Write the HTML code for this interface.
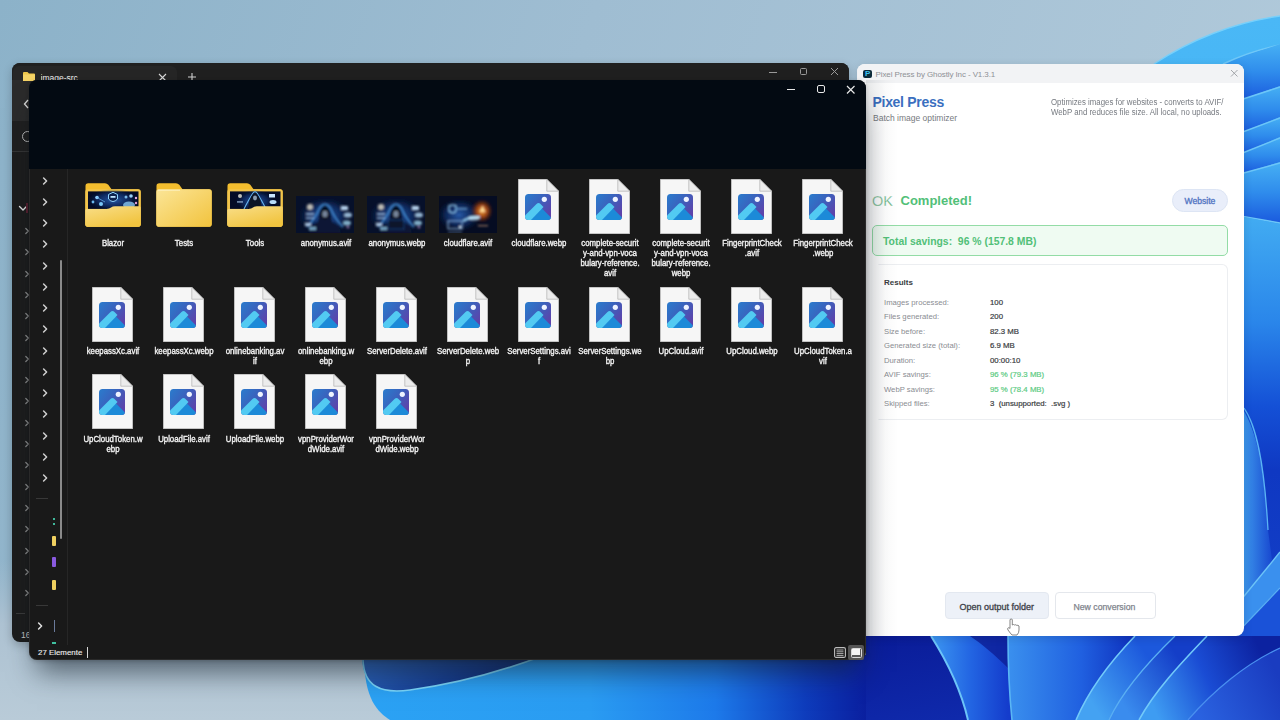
<!DOCTYPE html>
<html><head><meta charset="utf-8">
<style>
*{margin:0;padding:0;box-sizing:border-box}
html,body{width:1280px;height:720px;overflow:hidden;font-family:"Liberation Sans",sans-serif}
body{position:relative;background:#a9c4d8}
.abs{position:absolute}
.lbl{position:absolute;width:80px;text-align:center;color:#f4f4f4;font-size:8.6px;line-height:9.7px;white-space:nowrap;-webkit-text-stroke:0.35px #f4f4f4;transform:scaleX(0.91);transform-origin:50% 0}
</style></head>
<body>
<svg width="0" height="0" style="position:absolute">
<defs>
<linearGradient id="ig" x1="0" y1="0" x2="1" y2="0.7">
<stop offset="0" stop-color="#2a7ccd"/><stop offset="0.5" stop-color="#3a62bd"/><stop offset="1" stop-color="#5e42aa"/></linearGradient>
<clipPath id="icp"><rect x="7" y="15" width="26" height="26" rx="3.5"/></clipPath>
<linearGradient id="fb" x1="0" y1="0" x2="1" y2="1">
<stop offset="0" stop-color="#fbe597"/><stop offset="1" stop-color="#f2c33d"/></linearGradient>
<linearGradient id="ff" x1="0" y1="0" x2="0.6" y2="1">
<stop offset="0" stop-color="#f9de88"/><stop offset="1" stop-color="#f1c43f"/></linearGradient>
<radialGradient id="gB" cx="0.5" cy="0.5" r="0.5"><stop offset="0" stop-color="#2a64b8" stop-opacity="0.9"/><stop offset="0.6" stop-color="#153a80" stop-opacity="0.6"/><stop offset="1" stop-color="#0a1a40" stop-opacity="0"/></radialGradient>
<radialGradient id="glow1" cx="0.5" cy="0.5" r="0.5">
<stop offset="0" stop-color="#6fc4ff" stop-opacity="0.9"/><stop offset="1" stop-color="#6fc4ff" stop-opacity="0"/></radialGradient>
<radialGradient id="glowO" cx="0.5" cy="0.5" r="0.5">
<stop offset="0" stop-color="#ffb040" stop-opacity="1"/><stop offset="0.5" stop-color="#d85a10" stop-opacity="0.7"/><stop offset="1" stop-color="#802000" stop-opacity="0"/></radialGradient>
<filter id="bl5" x="-10%" y="-10%" width="120%" height="120%"><feGaussianBlur stdDeviation="0.9"/></filter><filter id="bl3" x="-10%" y="-10%" width="120%" height="120%"><feGaussianBlur stdDeviation="0.45"/></filter>
<symbol id="fi" viewBox="0 0 41 55">
<path d="M0.3 0.3 H28.8 L40.7 12.2 V54.7 H0.3 Z" fill="#f6f6f6" stroke="#cfcfcf" stroke-width="0.6"/>
<path d="M28.8 0.3 V12.2 H40.7 Z" fill="#ececec" stroke="#b0b0b0" stroke-width="0.7"/>
<g clip-path="url(#icp)">
<rect x="7" y="15" width="26" height="26" fill="url(#ig)"/>
<path d="M19.5 25 L33 38.5 V41 H12 Z" fill="#1c8ad8"/>
<path d="M7 36.5 L18.5 25 Q20.5 23.2 22.5 25 L25.5 28 L13 41 H7 Z" fill="#52caf2"/>
</g>
<circle cx="26.3" cy="20.3" r="2.6" fill="#eef3ff"/>
</symbol>
<symbol id="fold" viewBox="0 0 56 44">
<path d="M1 2.5 Q1 0 3.5 0 H20 Q22.5 0 24 2 L27 6 H53 Q56 6 56 9 V41 Q56 44 53 44 H3 Q0 44 0 41 V3 Z" fill="#f1be38"/>
<rect x="0" y="6" width="56" height="38" rx="3" fill="url(#fb)"/>
<path d="M0.6 8 Q0.6 6 2.6 6 H24 L26 8" fill="none" stroke="#fff6cc" stroke-width="0.8" opacity="0.7"/>
</symbol>
<symbol id="foldimg" viewBox="0 0 56 44">
<path d="M1 2.5 Q1 0 3.5 0 H20 Q22.5 0 24 2 L27 6 H53 Q56 6 56 9 V41 Q56 44 53 44 H3 Q0 44 0 41 V3 Z" fill="#f1be38"/>
<rect x="0" y="6" width="56" height="38" rx="3" fill="#f2c548"/>
<rect x="2.5" y="8.2" width="51" height="18" fill="#06112c"/>
<path d="M0 27 Q0 25.5 1.5 25.5 H22 Q24.5 25.5 26 24.5 Q27.5 23.5 30 23.5 H54.5 Q56 23.5 56 25 V41 Q56 44 53 44 H3 Q0 44 0 41 Z" fill="url(#ff)"/>
</symbol>
</defs></svg>
<svg class="abs" style="left:0;top:0" width="1280" height="720" viewBox="0 0 1280 720">
<defs>
<linearGradient id="sky" x1="0" y1="0" x2="1" y2="0.2">
<stop offset="0" stop-color="#8cb2c9"/><stop offset="0.45" stop-color="#9fbdd2"/><stop offset="1" stop-color="#b0c9da"/></linearGradient>
<linearGradient id="skyb" x1="0" y1="0" x2="0" y2="1">
<stop offset="0" stop-color="#a8bfd0" stop-opacity="0"/><stop offset="0.4" stop-color="#aec3d3"/><stop offset="1" stop-color="#b9cbd8"/></linearGradient>
<linearGradient id="blueB" x1="0" y1="0" x2="1" y2="0">
<stop offset="0" stop-color="#2ba2f4"/><stop offset="0.45" stop-color="#2a9cf2"/><stop offset="0.7" stop-color="#1d7aea"/><stop offset="0.88" stop-color="#0e3cbc"/><stop offset="1" stop-color="#0a1f9f"/></linearGradient>
<linearGradient id="navy" x1="0" y1="0" x2="1" y2="0.3">
<stop offset="0" stop-color="#2f6cc8"/><stop offset="0.6" stop-color="#163e92"/><stop offset="1" stop-color="#0c2466"/></linearGradient>
<linearGradient id="ribTop" x1="0" y1="0" x2="0" y2="1">
<stop offset="0" stop-color="#4ab8f6"/><stop offset="1" stop-color="#36a4f2"/></linearGradient>
<linearGradient id="rs" x1="0" y1="0" x2="0" y2="1">
<stop offset="0" stop-color="#3aa4f2"/><stop offset="0.08" stop-color="#2a88ec"/><stop offset="0.25" stop-color="#34a0f0"/><stop offset="0.42" stop-color="#2478e6"/><stop offset="0.55" stop-color="#1248d0"/><stop offset="1" stop-color="#0e36c0"/></linearGradient>
<linearGradient id="band" x1="0" y1="0" x2="0" y2="1"><stop offset="0" stop-color="#46b0f4"/><stop offset="0.5" stop-color="#2f8cec"/><stop offset="1" stop-color="#1a5ade"/></linearGradient>
<linearGradient id="lower" x1="0" y1="0" x2="0" y2="1"><stop offset="0" stop-color="#42acf2"/><stop offset="0.25" stop-color="#2a86ea"/><stop offset="0.45" stop-color="#1450d6"/><stop offset="0.6" stop-color="#0f38c2"/><stop offset="1" stop-color="#1440c8"/></linearGradient>
<linearGradient id="petA" x1="0" y1="0" x2="1" y2="0">
<stop offset="0" stop-color="#2c78ea"/><stop offset="1" stop-color="#1440cc"/></linearGradient>
<linearGradient id="petB" x1="0" y1="0" x2="1" y2="0">
<stop offset="0" stop-color="#3488ea"/><stop offset="1" stop-color="#1a58dc"/></linearGradient>
<linearGradient id="dk" x1="0" y1="0" x2="1" y2="1">
<stop offset="0" stop-color="#0a1c98"/><stop offset="1" stop-color="#1232b8"/></linearGradient>
</defs>
<rect width="1280" height="720" fill="url(#sky)"/>
<rect x="0" y="560" width="420" height="160" fill="url(#skyb)"/>
<path d="M364 655 C364 700 378 712 390 720 L866 720 L866 655 Z" fill="url(#blueB)"/>
<path d="M362 655 C362 684 378 694 410 690 C455 684 500 672 545 655 Z" fill="url(#navy)"/>
<path d="M363 660 C364 686 380 694 410 690 C455 684 500 672 545 655" fill="none" stroke="#7ad6fa" stroke-width="1.6"/>
<path d="M1154 64 C1190 40 1235 22 1280 16 L1280 720 L1150 720 L1150 66 Z" fill="url(#ribTop)"/>
<path d="M1154 64 C1190 40 1235 22 1280 16" fill="none" stroke="#78d0fa" stroke-width="1.4"/>
<path d="M1223 64 C1240 56 1260 49 1280 45 L1280 720 L1200 720 L1200 70 Z" fill="url(#rs)"/>
<path d="M1223 64 C1240 56 1260 49 1280 45" fill="none" stroke="#70c8f8" stroke-width="1.4"/>
<path d="M1240 58 L1280 44 L1280 87 L1240 100 Z" fill="url(#band)"/>
<path d="M1240 100 L1280 86 L1280 118 L1240 133 Z" fill="url(#band)"/>
<path d="M1240 133 L1280 117 L1280 138 L1240 154 Z" fill="url(#band)"/>
<path d="M1240 154 L1280 137 L1280 163 L1240 174 Z" fill="url(#band)"/>
<path d="M1240 174 L1280 162 L1280 223 L1240 216 Z" fill="url(#band)"/>
<path d="M1240 100 L1280 87" fill="none" stroke="#6cc6f8" stroke-width="1.5"/>
<path d="M1240 133 L1280 118" fill="none" stroke="#6cc6f8" stroke-width="1.5"/>
<path d="M1240 154 L1280 138" fill="none" stroke="#6cc6f8" stroke-width="1.5"/>
<path d="M1240 174 L1280 163" fill="none" stroke="#6cc6f8" stroke-width="1.5"/>
<path d="M1240 216 L1280 223" fill="none" stroke="#6cc6f8" stroke-width="1.5"/>
<path d="M1240 216 L1280 224 L1280 640 L1240 640 Z" fill="url(#lower)"/>
<linearGradient id="gP" gradientUnits="userSpaceOnUse" x1="1244" y1="0" x2="1272" y2="0"><stop offset="0" stop-color="#3c96ec"/><stop offset="1" stop-color="#1848d0"/></linearGradient>
<path d="M1236 400 C1254 420 1264 460 1268 530 L1272 560 L1236 610 Z" fill="url(#gP)"/>
<path d="M1244 408 C1256 425 1264 460 1268 530" fill="none" stroke="#5ab4f4" stroke-width="1.3"/>
<path d="M1236 606 L1280 552 L1280 588 L1236 634 Z" fill="#3a90ee"/>
<path d="M1236 606 L1280 552" fill="none" stroke="#6cc4f8" stroke-width="1.4"/>
<path d="M1236 634 L1280 588 L1280 640 L1236 640 Z" fill="#1a52d8"/>
<path d="M1236 634 L1280 588" fill="none" stroke="#5ab0f4" stroke-width="1.2"/>
<rect x="866" y="636" width="414" height="84" fill="url(#dk)"/>
<linearGradient id="gA" gradientUnits="userSpaceOnUse" x1="935" y1="0" x2="1008" y2="0"><stop offset="0" stop-color="#3a92f0"/><stop offset="0.5" stop-color="#2264e2"/><stop offset="1" stop-color="#143ccc"/></linearGradient>
<linearGradient id="gB2" gradientUnits="userSpaceOnUse" x1="1008" y1="0" x2="1130" y2="0"><stop offset="0" stop-color="#3a90ee"/><stop offset="0.6" stop-color="#2060e0"/><stop offset="1" stop-color="#0f34c0"/></linearGradient>
<linearGradient id="gC" gradientUnits="userSpaceOnUse" x1="1090" y1="700" x2="1150" y2="660"><stop offset="0" stop-color="#44a2f2"/><stop offset="1" stop-color="#1c58dc"/></linearGradient>
<linearGradient id="gD" gradientUnits="userSpaceOnUse" x1="1120" y1="700" x2="1180" y2="660"><stop offset="0" stop-color="#3a8cee"/><stop offset="1" stop-color="#143ec8"/></linearGradient>
<linearGradient id="gE" gradientUnits="userSpaceOnUse" x1="1150" y1="700" x2="1260" y2="650"><stop offset="0" stop-color="#3e9cf2"/><stop offset="0.5" stop-color="#1a4cd4"/><stop offset="1" stop-color="#0c22a0"/></linearGradient>
<linearGradient id="gF" gradientUnits="userSpaceOnUse" x1="1200" y1="720" x2="1280" y2="680"><stop offset="0" stop-color="#2a62e0"/><stop offset="1" stop-color="#1a3cc0"/></linearGradient>
<path d="M931 636 C950 666 962 694 968 720 L1012 720 C1009 690 1008 662 1008 636 Z" fill="url(#gA)"/>
<path d="M970 636 L1008 636 L1008 668 C995 655 982 644 970 636 Z" fill="#0c1e96" opacity="0.8"/>
<path d="M931 636 C950 666 962 694 968 720" fill="none" stroke="#6cc4f8" stroke-width="2"/>
<path d="M1008 636 L1135 636 C1108 664 1088 692 1076 720 L1012 720 C1009 690 1008 662 1008 636 Z" fill="url(#gB2)"/>
<path d="M1008 636 C1008 662 1009 690 1012 720" fill="none" stroke="#5ab6f4" stroke-width="1.6"/>
<path d="M1135 636 C1108 664 1088 692 1076 720 L1109 720 C1122 692 1146 664 1175 636 Z" fill="url(#gC)"/>
<path d="M1135 636 C1108 664 1088 692 1076 720" fill="none" stroke="#72cafa" stroke-width="1.6"/>
<path d="M1175 636 C1146 664 1122 692 1109 720 L1139 720 C1154 692 1180 664 1207 636 Z" fill="url(#gD)"/>
<path d="M1175 636 C1146 664 1122 692 1109 720" fill="none" stroke="#5ab0f4" stroke-width="1.3"/>
<path d="M1207 636 C1180 664 1154 692 1139 720 L1188 720 C1212 692 1245 664 1280 648 L1280 636 Z" fill="url(#gE)"/>
<path d="M1207 636 C1180 664 1154 692 1139 720" fill="none" stroke="#72cafa" stroke-width="1.6"/>
<path d="M1188 720 C1212 692 1245 664 1280 648 L1280 720 Z" fill="url(#gF)"/>
<path d="M1188 720 C1212 692 1245 664 1280 648" fill="none" stroke="#4a90f0" stroke-width="1.3"/>
</svg>
<div class="abs" style="left:857px;top:64px;width:387px;height:572px;background:#ffffff;border-radius:8px;overflow:hidden;box-shadow:0 2px 10px rgba(0,0,0,.12)">
<div class="abs" style="left:0;top:0;width:387px;height:19px;background:#f2f3f5"></div>
</div>
<div class="abs" style="left:863px;top:69.5px;width:9px;height:8.5px;background:#0b2a3a;border-radius:2px"></div>
<div class="abs" style="left:865px;top:69px;font-size:8px;font-weight:bold;color:#3cc0f0;line-height:10px">P</div>
<div class="abs" style="left:875.5px;top:70px;font-size:8px;color:#8e9196;white-space:nowrap;letter-spacing:-0.1px">Pixel Press by Ghostly Inc - V1.3.1</div>
<svg class="abs" style="left:1230.25px;top:69.25px" width="8.5" height="8.5" viewBox="-4.25 -4.25 8.5 8.5"><path d="M-3.25 -3.25 L3.25 3.25 M3.25 -3.25 L-3.25 3.25" stroke="#9a9da2" stroke-width="0.9" fill="none"/></svg>
<div class="abs" style="left:872.5px;top:94px;font-size:14px;font-weight:bold;color:#3b6fc0;white-space:nowrap;letter-spacing:-0.3px">Pixel Press</div>
<div class="abs" style="left:873px;top:112.5px;font-size:8.5px;color:#777a80;white-space:nowrap">Batch image optimizer</div>
<div class="abs" style="left:1050.5px;top:97.2px;font-size:8.3px;color:#767a80;white-space:nowrap;line-height:10.3px;transform:scaleX(0.945);transform-origin:0 0">Optimizes images for websites - converts to AVIF/<br>WebP and reduces file size. All local, no uploads.</div>
<div class="abs" style="left:872px;top:193px;font-size:14.5px;color:#5fae7c;white-space:nowrap;font-weight:normal;-webkit-text-stroke:0.3px #ffffff">OK</div>
<div class="abs" style="left:900.5px;top:193px;font-size:13px;font-weight:bold;color:#52c078;white-space:nowrap">Completed!</div>
<div class="abs" style="left:1172px;top:189px;width:56px;height:23px;background:#e9eefa;border:1px solid #dde5f4;border-radius:12px"></div>
<div class="abs" style="left:1184.5px;top:196px;font-size:8.6px;color:#5577c4;white-space:nowrap;-webkit-text-stroke:0.35px #5577c4">Website</div>
<div class="abs" style="left:872px;top:225px;width:356px;height:31px;background:#effbf2;border:1px solid #93dca6;border-radius:5px"></div>
<div class="abs" style="left:883px;top:236px;font-size:10.4px;font-weight:bold;color:#52c078;white-space:pre">Total savings:  96 % (157.8 MB)</div>
<div class="abs" style="left:878px;top:264px;width:350px;height:156px;background:#fff;border:1px solid #eceef1;border-left-color:transparent;border-radius:0 6px 6px 0"></div>
<div class="abs" style="left:884px;top:278.3px;font-size:8px;font-weight:bold;color:#3a3d42;white-space:nowrap">Results</div>
<div class="abs" style="left:884px;top:297.5px;font-size:7.7px;color:#8a8d92;white-space:nowrap">Images processed:</div>
<div class="abs" style="left:990px;top:297.5px;font-size:7.8px;color:#3a3d42;white-space:pre;-webkit-text-stroke:0.2px #3a3d42">100</div>
<div class="abs" style="left:884px;top:312.0px;font-size:7.7px;color:#8a8d92;white-space:nowrap">Files generated:</div>
<div class="abs" style="left:990px;top:312.0px;font-size:7.8px;color:#3a3d42;white-space:pre;-webkit-text-stroke:0.2px #3a3d42">200</div>
<div class="abs" style="left:884px;top:326.5px;font-size:7.7px;color:#8a8d92;white-space:nowrap">Size before:</div>
<div class="abs" style="left:990px;top:326.5px;font-size:7.8px;color:#3a3d42;white-space:pre;-webkit-text-stroke:0.2px #3a3d42">82.3 MB</div>
<div class="abs" style="left:884px;top:341.0px;font-size:7.7px;color:#8a8d92;white-space:nowrap">Generated size (total):</div>
<div class="abs" style="left:990px;top:341.0px;font-size:7.8px;color:#3a3d42;white-space:pre;-webkit-text-stroke:0.2px #3a3d42">6.9 MB</div>
<div class="abs" style="left:884px;top:355.5px;font-size:7.7px;color:#8a8d92;white-space:nowrap">Duration:</div>
<div class="abs" style="left:990px;top:355.5px;font-size:7.8px;color:#3a3d42;white-space:pre;-webkit-text-stroke:0.2px #3a3d42">00:00:10</div>
<div class="abs" style="left:884px;top:370.0px;font-size:7.7px;color:#8a8d92;white-space:nowrap">AVIF savings:</div>
<div class="abs" style="left:990px;top:370.0px;font-size:7.8px;color:#5dcc84;white-space:pre;-webkit-text-stroke:0.2px #5dcc84">96 % (79.3 MB)</div>
<div class="abs" style="left:884px;top:384.5px;font-size:7.7px;color:#8a8d92;white-space:nowrap">WebP savings:</div>
<div class="abs" style="left:990px;top:384.5px;font-size:7.8px;color:#5dcc84;white-space:pre;-webkit-text-stroke:0.2px #5dcc84">95 % (78.4 MB)</div>
<div class="abs" style="left:884px;top:399.0px;font-size:7.7px;color:#8a8d92;white-space:nowrap">Skipped files:</div>
<div class="abs" style="left:990px;top:399.0px;font-size:7.8px;color:#3a3d42;white-space:pre;-webkit-text-stroke:0.2px #3a3d42">3  (unsupported:  .svg )</div>
<div class="abs" style="left:945px;top:592px;width:104px;height:27px;background:#edf1f8;border:1px solid #e3e8f0;border-radius:4px"></div>
<div class="abs" style="left:959.5px;top:601.6px;font-size:9px;color:#3d4149;white-space:nowrap;-webkit-text-stroke:0.3px #3d4149">Open output folder</div>
<div class="abs" style="left:1054.5px;top:592px;width:101px;height:27px;background:#fff;border:1px solid #e4e7ec;border-radius:4px"></div>
<div class="abs" style="left:1073.5px;top:601.8px;font-size:8.7px;color:#80848c;white-space:nowrap;-webkit-text-stroke:0.25px #80848c">New conversion</div>
<div class="abs" style="left:866px;top:80px;width:30px;height:556px;background:linear-gradient(90deg,rgba(10,20,30,.1),rgba(10,20,30,.06) 30%,rgba(10,20,30,.02) 65%,rgba(0,0,0,0))"></div>
<div class="abs" style="left:12px;top:63px;width:837px;height:579px;background:#1c1c1c;border-radius:8px;overflow:hidden;box-shadow:0 3px 10px rgba(0,0,0,.22)">
<div class="abs" style="left:0;top:0;width:837px;height:17px;background:#202020"></div>
<div class="abs" style="left:1px;top:3px;width:164px;height:14px;background:#262626;border-radius:6px 6px 0 0"></div>
<div class="abs" style="left:0;top:17px;width:837px;height:41px;background:#2b2b2b"></div>
<div class="abs" style="left:0;top:58px;width:837px;height:30px;background:#1f1f1f"></div>
<div class="abs" style="left:0;top:88px;width:837px;height:1px;background:#2e2e2e"></div>
</div>
<svg class="abs" style="left:23px;top:72px" width="12" height="9" viewBox="0 0 12 9"><path d="M0 1 Q0 0 1 0 H4.5 L6 1.5 H11 Q12 1.5 12 2.5 V9 H0 Z" fill="#eec64a"/><rect x="0" y="2.5" width="12" height="6.5" fill="#f6d466"/></svg>
<div class="abs" style="left:40.5px;top:73px;font-size:8.5px;color:#eeeeee;white-space:nowrap;height:7px;overflow:hidden">image-src</div>
<svg class="abs" style="left:158.0px;top:72.5px" width="9" height="9" viewBox="-4.5 -4.5 9 9"><path d="M-3.5 -3.5 L3.5 3.5 M3.5 -3.5 L-3.5 3.5" stroke="#d8d8d8" stroke-width="1.1" fill="none"/></svg>
<svg class="abs" style="left:187px;top:72px" width="10" height="10" viewBox="0 0 10 10"><path d="M5 1 V9 M1 5 H9" stroke="#d0d0d0" stroke-width="1.1"/></svg>
<div class="abs" style="left:769px;top:72px;width:8px;height:1px;background:#9a9a9a"></div>
<div class="abs" style="left:800px;top:68px;width:7px;height:7px;border:1px solid #9a9a9a;border-radius:1.5px"></div>
<svg class="abs" style="left:829.5px;top:67.0px" width="9" height="9" viewBox="-4.5 -4.5 9 9"><path d="M-3.5 -3.5 L3.5 3.5 M3.5 -3.5 L-3.5 3.5" stroke="#9a9a9a" stroke-width="1" fill="none"/></svg>
<svg class="abs" style="left:23px;top:99px" width="6" height="10" viewBox="0 0 6 10"><path d="M5 1 L1.5 5 L5 9" fill="none" stroke="#d8d8d8" stroke-width="1.3"/></svg>
<div class="abs" style="left:22px;top:131px;width:11px;height:11px;border:1px solid #b8b8b8;border-radius:50%"></div>
<div class="abs" style="left:12px;top:151px;width:17px;height:1px;background:#343434"></div>
<svg class="abs" style="left:17.5px;top:204px" width="10" height="8" viewBox="0 0 10 8"><path d="M1.5 2.5 L5 6 L8.5 2.5" fill="none" stroke="#e0e0e0" stroke-width="1.4" stroke-linecap="round" stroke-linejoin="round"/></svg>
<div class="abs" style="left:26px;top:203px;width:1.5px;height:10px;background:#5a2030"></div>
<svg class="abs" style="left:24px;top:227.0px" width="6" height="8" viewBox="0 0 6 8"><path d="M1.8 1.5 L4.3 4 L1.8 6.5" fill="none" stroke="#8c8c8c" stroke-width="1.2" stroke-linecap="round" stroke-linejoin="round"/></svg>
<svg class="abs" style="left:24px;top:248.3px" width="6" height="8" viewBox="0 0 6 8"><path d="M1.8 1.5 L4.3 4 L1.8 6.5" fill="none" stroke="#8c8c8c" stroke-width="1.2" stroke-linecap="round" stroke-linejoin="round"/></svg>
<svg class="abs" style="left:24px;top:269.6px" width="6" height="8" viewBox="0 0 6 8"><path d="M1.8 1.5 L4.3 4 L1.8 6.5" fill="none" stroke="#8c8c8c" stroke-width="1.2" stroke-linecap="round" stroke-linejoin="round"/></svg>
<svg class="abs" style="left:24px;top:290.9px" width="6" height="8" viewBox="0 0 6 8"><path d="M1.8 1.5 L4.3 4 L1.8 6.5" fill="none" stroke="#8c8c8c" stroke-width="1.2" stroke-linecap="round" stroke-linejoin="round"/></svg>
<svg class="abs" style="left:24px;top:312.2px" width="6" height="8" viewBox="0 0 6 8"><path d="M1.8 1.5 L4.3 4 L1.8 6.5" fill="none" stroke="#8c8c8c" stroke-width="1.2" stroke-linecap="round" stroke-linejoin="round"/></svg>
<svg class="abs" style="left:24px;top:333.5px" width="6" height="8" viewBox="0 0 6 8"><path d="M1.8 1.5 L4.3 4 L1.8 6.5" fill="none" stroke="#8c8c8c" stroke-width="1.2" stroke-linecap="round" stroke-linejoin="round"/></svg>
<svg class="abs" style="left:24px;top:354.8px" width="6" height="8" viewBox="0 0 6 8"><path d="M1.8 1.5 L4.3 4 L1.8 6.5" fill="none" stroke="#8c8c8c" stroke-width="1.2" stroke-linecap="round" stroke-linejoin="round"/></svg>
<svg class="abs" style="left:24px;top:376.1px" width="6" height="8" viewBox="0 0 6 8"><path d="M1.8 1.5 L4.3 4 L1.8 6.5" fill="none" stroke="#8c8c8c" stroke-width="1.2" stroke-linecap="round" stroke-linejoin="round"/></svg>
<svg class="abs" style="left:24px;top:397.4px" width="6" height="8" viewBox="0 0 6 8"><path d="M1.8 1.5 L4.3 4 L1.8 6.5" fill="none" stroke="#8c8c8c" stroke-width="1.2" stroke-linecap="round" stroke-linejoin="round"/></svg>
<svg class="abs" style="left:24px;top:418.7px" width="6" height="8" viewBox="0 0 6 8"><path d="M1.8 1.5 L4.3 4 L1.8 6.5" fill="none" stroke="#8c8c8c" stroke-width="1.2" stroke-linecap="round" stroke-linejoin="round"/></svg>
<svg class="abs" style="left:24px;top:440.0px" width="6" height="8" viewBox="0 0 6 8"><path d="M1.8 1.5 L4.3 4 L1.8 6.5" fill="none" stroke="#8c8c8c" stroke-width="1.2" stroke-linecap="round" stroke-linejoin="round"/></svg>
<svg class="abs" style="left:24px;top:461.3px" width="6" height="8" viewBox="0 0 6 8"><path d="M1.8 1.5 L4.3 4 L1.8 6.5" fill="none" stroke="#8c8c8c" stroke-width="1.2" stroke-linecap="round" stroke-linejoin="round"/></svg>
<svg class="abs" style="left:24px;top:482.6px" width="6" height="8" viewBox="0 0 6 8"><path d="M1.8 1.5 L4.3 4 L1.8 6.5" fill="none" stroke="#8c8c8c" stroke-width="1.2" stroke-linecap="round" stroke-linejoin="round"/></svg>
<svg class="abs" style="left:24px;top:503.9px" width="6" height="8" viewBox="0 0 6 8"><path d="M1.8 1.5 L4.3 4 L1.8 6.5" fill="none" stroke="#8c8c8c" stroke-width="1.2" stroke-linecap="round" stroke-linejoin="round"/></svg>
<svg class="abs" style="left:24px;top:525.2px" width="6" height="8" viewBox="0 0 6 8"><path d="M1.8 1.5 L4.3 4 L1.8 6.5" fill="none" stroke="#8c8c8c" stroke-width="1.2" stroke-linecap="round" stroke-linejoin="round"/></svg>
<svg class="abs" style="left:24px;top:546.5px" width="6" height="8" viewBox="0 0 6 8"><path d="M1.8 1.5 L4.3 4 L1.8 6.5" fill="none" stroke="#8c8c8c" stroke-width="1.2" stroke-linecap="round" stroke-linejoin="round"/></svg>
<svg class="abs" style="left:24px;top:567.8px" width="6" height="8" viewBox="0 0 6 8"><path d="M1.8 1.5 L4.3 4 L1.8 6.5" fill="none" stroke="#8c8c8c" stroke-width="1.2" stroke-linecap="round" stroke-linejoin="round"/></svg>
<svg class="abs" style="left:24px;top:589.1px" width="6" height="8" viewBox="0 0 6 8"><path d="M1.8 1.5 L4.3 4 L1.8 6.5" fill="none" stroke="#8c8c8c" stroke-width="1.2" stroke-linecap="round" stroke-linejoin="round"/></svg>
<div class="abs" style="left:16px;top:613px;width:9px;height:1px;background:#3a3a3a"></div>
<div class="abs" style="left:21px;top:630px;font-size:8.5px;color:#c8c8c8;white-space:nowrap">16</div>
<div class="abs" style="left:29px;top:80px;width:837px;height:580px;background:#191919;border-radius:8px;overflow:hidden;box-shadow:0 20px 26px -8px rgba(20,30,40,.6),0 1px 4px rgba(0,0,0,.2),inset 0 0 0 1px rgba(255,255,255,.07)">
<div class="abs" style="left:0;top:0;width:837px;height:89px;background:#030a12"></div>
<div class="abs" style="left:38px;top:89px;width:1px;height:476px;background:#262626"></div>
</div>
<div class="abs" style="left:787px;top:89px;width:8px;height:1.2px;background:#e8e8e8"></div>
<div class="abs" style="left:816.5px;top:85px;width:8px;height:8px;border:1.2px solid #e8e8e8;border-radius:2px"></div>
<svg class="abs" style="left:846.25px;top:84.55px" width="9.5" height="9.5" viewBox="-4.75 -4.75 9.5 9.5"><path d="M-3.75 -3.75 L3.75 3.75 M3.75 -3.75 L-3.75 3.75" stroke="#e8e8e8" stroke-width="1.2" fill="none"/></svg>
<svg class="abs" style="left:41px;top:175.5px" width="8" height="10" viewBox="0 0 8 10"><path d="M2.6 2 L5.6 5 L2.6 8" fill="none" stroke="#cfcfcf" stroke-width="1.5" stroke-linecap="round" stroke-linejoin="round"/></svg>
<svg class="abs" style="left:41px;top:196.8px" width="8" height="10" viewBox="0 0 8 10"><path d="M2.6 2 L5.6 5 L2.6 8" fill="none" stroke="#cfcfcf" stroke-width="1.5" stroke-linecap="round" stroke-linejoin="round"/></svg>
<svg class="abs" style="left:41px;top:218.0px" width="8" height="10" viewBox="0 0 8 10"><path d="M2.6 2 L5.6 5 L2.6 8" fill="none" stroke="#cfcfcf" stroke-width="1.5" stroke-linecap="round" stroke-linejoin="round"/></svg>
<svg class="abs" style="left:41px;top:239.2px" width="8" height="10" viewBox="0 0 8 10"><path d="M2.6 2 L5.6 5 L2.6 8" fill="none" stroke="#cfcfcf" stroke-width="1.5" stroke-linecap="round" stroke-linejoin="round"/></svg>
<svg class="abs" style="left:41px;top:260.5px" width="8" height="10" viewBox="0 0 8 10"><path d="M2.6 2 L5.6 5 L2.6 8" fill="none" stroke="#cfcfcf" stroke-width="1.5" stroke-linecap="round" stroke-linejoin="round"/></svg>
<svg class="abs" style="left:41px;top:281.8px" width="8" height="10" viewBox="0 0 8 10"><path d="M2.6 2 L5.6 5 L2.6 8" fill="none" stroke="#cfcfcf" stroke-width="1.5" stroke-linecap="round" stroke-linejoin="round"/></svg>
<svg class="abs" style="left:41px;top:303.0px" width="8" height="10" viewBox="0 0 8 10"><path d="M2.6 2 L5.6 5 L2.6 8" fill="none" stroke="#cfcfcf" stroke-width="1.5" stroke-linecap="round" stroke-linejoin="round"/></svg>
<svg class="abs" style="left:41px;top:324.2px" width="8" height="10" viewBox="0 0 8 10"><path d="M2.6 2 L5.6 5 L2.6 8" fill="none" stroke="#cfcfcf" stroke-width="1.5" stroke-linecap="round" stroke-linejoin="round"/></svg>
<svg class="abs" style="left:41px;top:345.5px" width="8" height="10" viewBox="0 0 8 10"><path d="M2.6 2 L5.6 5 L2.6 8" fill="none" stroke="#cfcfcf" stroke-width="1.5" stroke-linecap="round" stroke-linejoin="round"/></svg>
<svg class="abs" style="left:41px;top:366.8px" width="8" height="10" viewBox="0 0 8 10"><path d="M2.6 2 L5.6 5 L2.6 8" fill="none" stroke="#cfcfcf" stroke-width="1.5" stroke-linecap="round" stroke-linejoin="round"/></svg>
<svg class="abs" style="left:41px;top:388.0px" width="8" height="10" viewBox="0 0 8 10"><path d="M2.6 2 L5.6 5 L2.6 8" fill="none" stroke="#cfcfcf" stroke-width="1.5" stroke-linecap="round" stroke-linejoin="round"/></svg>
<svg class="abs" style="left:41px;top:409.2px" width="8" height="10" viewBox="0 0 8 10"><path d="M2.6 2 L5.6 5 L2.6 8" fill="none" stroke="#cfcfcf" stroke-width="1.5" stroke-linecap="round" stroke-linejoin="round"/></svg>
<svg class="abs" style="left:41px;top:430.5px" width="8" height="10" viewBox="0 0 8 10"><path d="M2.6 2 L5.6 5 L2.6 8" fill="none" stroke="#cfcfcf" stroke-width="1.5" stroke-linecap="round" stroke-linejoin="round"/></svg>
<svg class="abs" style="left:41px;top:451.8px" width="8" height="10" viewBox="0 0 8 10"><path d="M2.6 2 L5.6 5 L2.6 8" fill="none" stroke="#cfcfcf" stroke-width="1.5" stroke-linecap="round" stroke-linejoin="round"/></svg>
<svg class="abs" style="left:41px;top:473.0px" width="8" height="10" viewBox="0 0 8 10"><path d="M2.6 2 L5.6 5 L2.6 8" fill="none" stroke="#cfcfcf" stroke-width="1.5" stroke-linecap="round" stroke-linejoin="round"/></svg>
<div class="abs" style="left:60px;top:260px;width:2px;height:279px;background:#8a8a8a;border-radius:1px"></div>
<div class="abs" style="left:36px;top:498px;width:12px;height:1px;background:#383838"></div>
<div class="abs" style="left:53px;top:518px;width:2px;height:2px;background:#3fb89a"></div>
<div class="abs" style="left:53px;top:523px;width:2px;height:2px;background:#3fb89a"></div>
<div class="abs" style="left:52px;top:536px;width:4px;height:10px;background:#f0d060;border-radius:1px"></div>
<div class="abs" style="left:52px;top:557px;width:4px;height:10px;background:#8a5ae0;border-radius:1px"></div>
<div class="abs" style="left:52px;top:580px;width:4px;height:10px;background:#f0d060;border-radius:1px"></div>
<div class="abs" style="left:36px;top:605px;width:12px;height:1px;background:#383838"></div>
<svg class="abs" style="left:36px;top:621px" width="8" height="10" viewBox="0 0 8 10"><path d="M2.6 2 L5.6 5 L2.6 8" fill="none" stroke="#e0e0e0" stroke-width="1.5" stroke-linecap="round" stroke-linejoin="round"/></svg>
<div class="abs" style="left:53.5px;top:620px;width:1px;height:12px;background:#6a7a9a"></div>
<div class="abs" style="left:52px;top:642px;width:4px;height:2px;background:#3fc0a0"></div>
<div class="abs" style="left:38px;top:648px;font-size:7.9px;color:#ececec;white-space:nowrap;-webkit-text-stroke:0.12px #ececec">27 Elemente</div>
<div class="abs" style="left:87px;top:647px;width:1.3px;height:11px;background:#d8d8d8"></div>
<svg class="abs" style="left:834px;top:647px" width="12" height="11" viewBox="0 0 12 11"><rect x="0.6" y="0.6" width="10.8" height="9.8" rx="1.5" fill="none" stroke="#bdbdbd" stroke-width="1.1"/><path d="M2.5 3 H9.5 M2.5 4.8 H9.5 M2.5 6.6 H9.5 M2.5 8.4 H9.5" stroke="#bdbdbd" stroke-width="0.9"/></svg>
<div class="abs" style="left:848px;top:645px;width:16px;height:15px;background:#555;border-radius:2px"></div>
<div class="abs" style="left:850.5px;top:647.5px;width:11px;height:10px;border:1px solid #d8d8d8;border-radius:1.5px;background:#5a5a5a"></div>
<div class="abs" style="left:852px;top:649px;width:8px;height:5.5px;background:#f6f6f6"></div>
<svg class="abs" style="left:85px;top:183px" width="56" height="44" viewBox="0 0 56 44"><path d="M0.5 3 Q0.5 0.3 3.2 0.3 H20 Q22 0.3 23.3 1.8 L26.5 6.3 H53 Q55.7 6.3 55.7 9 V41 Q55.7 43.7 53 43.7 H3 Q0.3 43.7 0.3 41 Z" fill="#f3bd2e"/><rect x="0.3" y="6.3" width="55.4" height="37.4" rx="2.8" fill="#f2c54c"/><rect x="3" y="8.4" width="50.5" height="17.5" fill="#050c26"/><g filter="url(#bl3)"><ellipse cx="28" cy="17" rx="26" ry="11" fill="url(#gB)"/>
<path d="M23.5 11.5 L28 9.3 L32.5 11.5 V16 Q28 21 23.5 16 Z" fill="#0a2050" stroke="#8fd4ff" stroke-width="1"/>
<rect x="25.5" y="13" width="5" height="1.8" fill="#c0e4ff"/>
<circle cx="12" cy="14.5" r="1.8" fill="#8fd0ff"/><circle cx="8" cy="19" r="1.4" fill="#6ab8f0"/><circle cx="16" cy="21" r="2" fill="#7ac8f8"/>
<path d="M12 14.5 L20 19" stroke="#6ab8f0" stroke-width="0.7"/>
<circle cx="41" cy="14" r="1.5" fill="#7ab8e8"/><circle cx="46" cy="13" r="1.8" fill="#9ad0f8"/>
<ellipse cx="44" cy="22" rx="6" ry="3.5" fill="#8ac8f0" opacity="0.8"/>
<circle cx="51" cy="15" r="1.2" fill="#e8b0e8"/><circle cx="51" cy="20" r="1.2" fill="#e0a0d8"/></g><path d="M0.3 27.5 Q0.3 26 1.8 26 H21.5 Q24.5 26 26 24.6 Q27.5 23.3 30 23.3 H54.2 Q55.7 23.3 55.7 24.8 V41 Q55.7 43.7 53 43.7 H3 Q0.3 43.7 0.3 41 Z" fill="url(#ff)"/></svg>
<div class="lbl" style="left:72.8px;top:239.4px">Blazor</div>
<svg class="abs" style="left:156px;top:183px" width="56" height="44" viewBox="0 0 56 44"><path d="M0.5 3 Q0.5 0.3 3.2 0.3 H20 Q22 0.3 23.3 1.8 L26.5 6.3 H53 Q55.7 6.3 55.7 9 V41 Q55.7 43.7 53 43.7 H3 Q0.3 43.7 0.3 41 Z" fill="#f3bd2e"/><rect x="0.3" y="6.3" width="55.4" height="37.4" rx="2.8" fill="url(#fb)"/><path d="M2 7.2 H24" stroke="#fff8d8" stroke-width="0.9" opacity="0.8"/></svg>
<div class="lbl" style="left:143.8px;top:239.4px">Tests</div>
<svg class="abs" style="left:227px;top:183px" width="56" height="44" viewBox="0 0 56 44"><path d="M0.5 3 Q0.5 0.3 3.2 0.3 H20 Q22 0.3 23.3 1.8 L26.5 6.3 H53 Q55.7 6.3 55.7 9 V41 Q55.7 43.7 53 43.7 H3 Q0.3 43.7 0.3 41 Z" fill="#f3bd2e"/><rect x="0.3" y="6.3" width="55.4" height="37.4" rx="2.8" fill="#f2c54c"/><rect x="3" y="8.4" width="50.5" height="17.5" fill="#050c26"/><g filter="url(#bl3)"><ellipse cx="28" cy="18" rx="20" ry="11" fill="url(#gB)"/>
<path d="M17 26 Q22 16 26 10 Q28 7.5 30 10 Q34 16 39 26" fill="none" stroke="#6ab8f0" stroke-width="1.1"/>
<path d="M21 26 Q22 15 26 11 Q28 9 30 11 Q34 15 35 26 Z" fill="#081228"/>
<ellipse cx="28" cy="15" rx="2" ry="2.4" fill="#8a9cb0"/>
<circle cx="13" cy="13" r="2" fill="#d0d0c8" opacity="0.9"/><rect x="10" y="18" width="6" height="1.8" fill="#a8c8e8" opacity="0.6"/>
<rect x="42" y="11" width="6" height="3.5" fill="#c8e4ff"/><ellipse cx="46" cy="19" rx="3.5" ry="2" fill="#b8dcf8"/></g><path d="M0.3 27.5 Q0.3 26 1.8 26 H21.5 Q24.5 26 26 24.6 Q27.5 23.3 30 23.3 H54.2 Q55.7 23.3 55.7 24.8 V41 Q55.7 43.7 53 43.7 H3 Q0.3 43.7 0.3 41 Z" fill="url(#ff)"/></svg>
<div class="lbl" style="left:214.8px;top:239.4px">Tools</div>
<svg class="abs" style="left:296px;top:196px" width="58" height="37" viewBox="0 0 58 37">
<rect width="58" height="37" fill="#06102a"/>
<g filter="url(#bl5)">
<ellipse cx="29" cy="20" rx="28" ry="19" fill="url(#gB)"/>
<path d="M11 31 Q19 23 23.5 12 Q29 4.5 34.5 12 Q39 23 47 31" fill="none" stroke="#4a9ae6" stroke-width="1.4" opacity="0.9"/>
<path d="M13 37 Q15 28 22 25.5 Q22.5 13 29 8.5 Q35.5 13 36 25.5 Q43 28 45 37 Z" fill="#0a1634"/>
<ellipse cx="29" cy="17.5" rx="4.6" ry="5.6" fill="#040916"/>
<ellipse cx="29" cy="18" rx="2.7" ry="3.3" fill="#8494aa" opacity="0.9"/>

<circle cx="14" cy="11" r="3" fill="#d0ccc0" opacity="0.9"/>
<rect x="10" y="17" width="8" height="2" fill="#a8c8e8" opacity="0.7"/>
<rect x="10" y="21" width="8" height="2" fill="#a8c8e8" opacity="0.6"/>
<rect x="9" y="27" width="6" height="3" fill="#c8e0f8" opacity="0.8"/>
<rect x="13" y="31" width="7" height="3" fill="#9ad8f8" opacity="0.7"/>
<rect x="45" y="10" width="7" height="4" rx="1" fill="#c8e4ff" opacity="0.9"/>
<ellipse cx="52" cy="19" rx="4" ry="2.5" fill="#b8dcf8" opacity="0.8"/>
<ellipse cx="51" cy="27" rx="4" ry="2.5" fill="#a8e0f8" opacity="0.75"/>
<circle cx="52" cy="31" r="1.5" fill="#d8a8e8" opacity="0.6"/>
</g>
</svg>
<div class="lbl" style="left:285.8px;top:239.4px">anonymus.avif</div>
<svg class="abs" style="left:367px;top:196px" width="58" height="37" viewBox="0 0 58 37">
<rect width="58" height="37" fill="#06102a"/>
<g filter="url(#bl5)">
<ellipse cx="29" cy="20" rx="28" ry="19" fill="url(#gB)"/>
<path d="M11 31 Q19 23 23.5 12 Q29 4.5 34.5 12 Q39 23 47 31" fill="none" stroke="#4a9ae6" stroke-width="1.4" opacity="0.9"/>
<path d="M13 37 Q15 28 22 25.5 Q22.5 13 29 8.5 Q35.5 13 36 25.5 Q43 28 45 37 Z" fill="#0a1634"/>
<ellipse cx="29" cy="17.5" rx="4.6" ry="5.6" fill="#040916"/>
<ellipse cx="29" cy="18" rx="2.7" ry="3.3" fill="#8494aa" opacity="0.9"/>
<rect x="21" y="24" width="16" height="9" fill="#08122a" stroke="#2a5aa0" stroke-width="0.6"/>
<circle cx="14" cy="11" r="3" fill="#d0ccc0" opacity="0.9"/>
<rect x="10" y="17" width="8" height="2" fill="#a8c8e8" opacity="0.7"/>
<rect x="10" y="21" width="8" height="2" fill="#a8c8e8" opacity="0.6"/>
<rect x="9" y="27" width="6" height="3" fill="#c8e0f8" opacity="0.8"/>
<rect x="13" y="31" width="7" height="3" fill="#9ad8f8" opacity="0.7"/>
<rect x="45" y="10" width="7" height="4" rx="1" fill="#c8e4ff" opacity="0.9"/>
<ellipse cx="52" cy="19" rx="4" ry="2.5" fill="#b8dcf8" opacity="0.8"/>
<ellipse cx="51" cy="27" rx="4" ry="2.5" fill="#a8e0f8" opacity="0.75"/>
<circle cx="52" cy="31" r="1.5" fill="#d8a8e8" opacity="0.6"/>
</g>
</svg>
<div class="lbl" style="left:356.8px;top:239.4px">anonymus.webp</div>
<svg class="abs" style="left:438.5px;top:196px" width="58" height="37" viewBox="0 0 58 37">
<rect width="58" height="37" fill="#050c22"/>
<g filter="url(#bl5)">
<ellipse cx="20" cy="19" rx="22" ry="17" fill="url(#gB)"/>
<ellipse cx="43" cy="15" rx="11" ry="12" fill="url(#glowO)"/>
<path d="M40.5 16 L43.5 9.5 L46.5 16 Z" fill="#ffd890"/>
<path d="M10 10 Q14 8 17 10 V15 Q14 19 10 15 Z" fill="none" stroke="#9ad8ff" stroke-width="1.1"/>
<rect x="18" y="12" width="10" height="1.5" fill="#7ab8e8" opacity="0.7"/>
<rect x="9" y="25" width="14" height="8" fill="none" stroke="#a8d4ff" stroke-width="0.8"/>
<circle cx="21" cy="31" r="1.3" fill="#e0f0ff"/>
<path d="M24 25 Q32 20 41 21" stroke="#a0dcff" stroke-width="2.2" fill="none" opacity="0.85"/>
<ellipse cx="35" cy="22" rx="6" ry="2.3" fill="#c8ecff" opacity="0.75"/>
<rect x="39" y="29" width="10" height="1.3" fill="#f0b080" opacity="0.6"/>
<rect x="9" y="36" width="14" height="1" fill="#a8d0f0" opacity="0.5"/>
</g>
</svg>
<div class="lbl" style="left:427.8px;top:239.4px">cloudflare.avif</div>
<svg class="abs" style="left:518.3px;top:179px" width="41" height="55" viewBox="0 0 41 55"><use href="#fi"/></svg>
<div class="lbl" style="left:498.8px;top:239.4px">cloudflare.webp</div>
<svg class="abs" style="left:589.3px;top:179px" width="41" height="55" viewBox="0 0 41 55"><use href="#fi"/></svg>
<div class="lbl" style="left:569.8px;top:239.4px">complete-securit<br>y-and-vpn-voca<br>bulary-reference.<br>avif</div>
<svg class="abs" style="left:660.3px;top:179px" width="41" height="55" viewBox="0 0 41 55"><use href="#fi"/></svg>
<div class="lbl" style="left:640.8px;top:239.4px">complete-securit<br>y-and-vpn-voca<br>bulary-reference.<br>webp</div>
<svg class="abs" style="left:731.3px;top:179px" width="41" height="55" viewBox="0 0 41 55"><use href="#fi"/></svg>
<div class="lbl" style="left:711.8px;top:239.4px">FingerprintCheck<br>.avif</div>
<svg class="abs" style="left:802.3px;top:179px" width="41" height="55" viewBox="0 0 41 55"><use href="#fi"/></svg>
<div class="lbl" style="left:782.8px;top:239.4px">FingerprintCheck<br>.webp</div>
<svg class="abs" style="left:92.3px;top:287px" width="41" height="55" viewBox="0 0 41 55"><use href="#fi"/></svg>
<div class="lbl" style="left:72.8px;top:346.8px">keepassXc.avif</div>
<svg class="abs" style="left:163.3px;top:287px" width="41" height="55" viewBox="0 0 41 55"><use href="#fi"/></svg>
<div class="lbl" style="left:143.8px;top:346.8px">keepassXc.webp</div>
<svg class="abs" style="left:234.3px;top:287px" width="41" height="55" viewBox="0 0 41 55"><use href="#fi"/></svg>
<div class="lbl" style="left:214.8px;top:346.8px">onlinebanking.av<br>if</div>
<svg class="abs" style="left:305.3px;top:287px" width="41" height="55" viewBox="0 0 41 55"><use href="#fi"/></svg>
<div class="lbl" style="left:285.8px;top:346.8px">onlinebanking.w<br>ebp</div>
<svg class="abs" style="left:376.3px;top:287px" width="41" height="55" viewBox="0 0 41 55"><use href="#fi"/></svg>
<div class="lbl" style="left:356.8px;top:346.8px">ServerDelete.avif</div>
<svg class="abs" style="left:447.3px;top:287px" width="41" height="55" viewBox="0 0 41 55"><use href="#fi"/></svg>
<div class="lbl" style="left:427.8px;top:346.8px">ServerDelete.web<br>p</div>
<svg class="abs" style="left:518.3px;top:287px" width="41" height="55" viewBox="0 0 41 55"><use href="#fi"/></svg>
<div class="lbl" style="left:498.8px;top:346.8px">ServerSettings.avi<br>f</div>
<svg class="abs" style="left:589.3px;top:287px" width="41" height="55" viewBox="0 0 41 55"><use href="#fi"/></svg>
<div class="lbl" style="left:569.8px;top:346.8px">ServerSettings.we<br>bp</div>
<svg class="abs" style="left:660.3px;top:287px" width="41" height="55" viewBox="0 0 41 55"><use href="#fi"/></svg>
<div class="lbl" style="left:640.8px;top:346.8px">UpCloud.avif</div>
<svg class="abs" style="left:731.3px;top:287px" width="41" height="55" viewBox="0 0 41 55"><use href="#fi"/></svg>
<div class="lbl" style="left:711.8px;top:346.8px">UpCloud.webp</div>
<svg class="abs" style="left:802.3px;top:287px" width="41" height="55" viewBox="0 0 41 55"><use href="#fi"/></svg>
<div class="lbl" style="left:782.8px;top:346.8px">UpCloudToken.a<br>vif</div>
<svg class="abs" style="left:92.3px;top:374px" width="41" height="55" viewBox="0 0 41 55"><use href="#fi"/></svg>
<div class="lbl" style="left:72.8px;top:434.8px">UpCloudToken.w<br>ebp</div>
<svg class="abs" style="left:163.3px;top:374px" width="41" height="55" viewBox="0 0 41 55"><use href="#fi"/></svg>
<div class="lbl" style="left:143.8px;top:434.8px">UploadFile.avif</div>
<svg class="abs" style="left:234.3px;top:374px" width="41" height="55" viewBox="0 0 41 55"><use href="#fi"/></svg>
<div class="lbl" style="left:214.8px;top:434.8px">UploadFile.webp</div>
<svg class="abs" style="left:305.3px;top:374px" width="41" height="55" viewBox="0 0 41 55"><use href="#fi"/></svg>
<div class="lbl" style="left:285.8px;top:434.8px">vpnProviderWor<br>dWide.avif</div>
<svg class="abs" style="left:376.3px;top:374px" width="41" height="55" viewBox="0 0 41 55"><use href="#fi"/></svg>
<div class="lbl" style="left:356.8px;top:434.8px">vpnProviderWor<br>dWide.webp</div>
<svg class="abs" style="left:1006px;top:617.5px" width="15" height="18" viewBox="0 0 15 18"><path d="M4 1.5 Q5.2 0.5 6.3 1.5 V7 Q7.5 6 8.6 7 Q9.8 6.3 10.8 7.4 Q12 6.8 13 8 V12 Q13 15 11 17 H6 Q4.5 15.5 2 12 Q1 10.5 2.2 9.8 Q3.2 9.4 4 10.5 Z" fill="#fff" stroke="#707070" stroke-width="0.85" stroke-linejoin="round"/></svg>
</body></html>
